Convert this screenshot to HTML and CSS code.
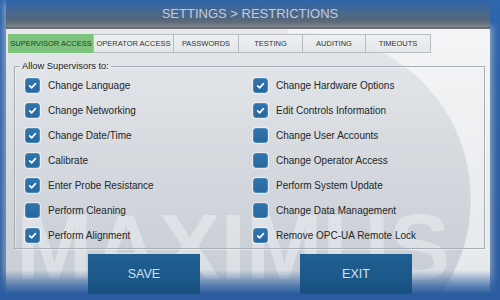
FILE: index.html
```html
<!DOCTYPE html>
<html>
<head>
<meta charset="utf-8">
<link rel="stylesheet" href="styles.css">
</head>
<body>
<div class="screen">
  <header class="topbar">
    <h1 class="title">SETTINGS &gt; RESTRICTIONS</h1>
  </header>
  <main class="panel">
    <div class="watermark" aria-hidden="true">MAXIMUS</div>
    <nav class="tabs">
      <div class="tab tab-sup active">SUPERVISOR ACCESS</div>
      <div class="tab tab-op">OPERATOR ACCESS</div>
      <div class="tab tab-pw">PASSWORDS</div>
      <div class="tab tab-test">TESTING</div>
      <div class="tab tab-aud">AUDITING</div>
      <div class="tab tab-time">TIMEOUTS</div>
    </nav>
    <fieldset class="group">
      <legend class="legend">Allow Supervisors to:</legend>
      <div class="grid">
        <div class="item"><span class="box on"><svg viewBox="0 0 15 15"><path d="M4.2 7.9l2.3 2.3 4.4-4.9"/></svg></span><span class="label">Change Language</span></div>
        <div class="item"><span class="box on"><svg viewBox="0 0 15 15"><path d="M4.2 7.9l2.3 2.3 4.4-4.9"/></svg></span><span class="label">Change Networking</span></div>
        <div class="item"><span class="box on"><svg viewBox="0 0 15 15"><path d="M4.2 7.9l2.3 2.3 4.4-4.9"/></svg></span><span class="label">Change Date/Time</span></div>
        <div class="item"><span class="box on"><svg viewBox="0 0 15 15"><path d="M4.2 7.9l2.3 2.3 4.4-4.9"/></svg></span><span class="label">Calibrate</span></div>
        <div class="item"><span class="box on"><svg viewBox="0 0 15 15"><path d="M4.2 7.9l2.3 2.3 4.4-4.9"/></svg></span><span class="label">Enter Probe Resistance</span></div>
        <div class="item"><span class="box"></span><span class="label">Perform Cleaning</span></div>
        <div class="item"><span class="box on"><svg viewBox="0 0 15 15"><path d="M4.2 7.9l2.3 2.3 4.4-4.9"/></svg></span><span class="label">Perform Alignment</span></div>
        <div class="item"><span class="box on"><svg viewBox="0 0 15 15"><path d="M4.2 7.9l2.3 2.3 4.4-4.9"/></svg></span><span class="label">Change Hardware Options</span></div>
        <div class="item"><span class="box on"><svg viewBox="0 0 15 15"><path d="M4.2 7.9l2.3 2.3 4.4-4.9"/></svg></span><span class="label">Edit Controls Information</span></div>
        <div class="item"><span class="box"></span><span class="label">Change User Accounts</span></div>
        <div class="item"><span class="box"></span><span class="label">Change Operator Access</span></div>
        <div class="item"><span class="box"></span><span class="label">Perform System Update</span></div>
        <div class="item"><span class="box"></span><span class="label">Change Data Management</span></div>
        <div class="item"><span class="box on"><svg viewBox="0 0 15 15"><path d="M4.2 7.9l2.3 2.3 4.4-4.9"/></svg></span><span class="label">Remove OPC-UA Remote Lock</span></div>
      </div>
    </fieldset>
    <div class="actions">
      <button class="btn">SAVE</button>
      <button class="btn">EXIT</button>
    </div>
  </main>
</div>
</body>
</html>
```

FILE: styles.css
```css
html, body {
  margin: 0;
  padding: 0;
}

body {
  width: 500px;
  height: 300px;
  overflow: hidden;
  font-family: "Liberation Sans", Arial, sans-serif;
}

.screen {
  width: 500px;
  height: 300px;
  display: flex;
  flex-direction: column;
  background: linear-gradient(180deg, #2f65ab 0%, #2c5fa3 50%, #2a5b9d 100%);
  overflow: hidden;
}

.topbar {
  height: 27px;
  margin: 0 10px 0 6px;
  padding-left: 4px;
  display: flex;
  align-items: center;
  justify-content: center;
  border-bottom: 2px solid #2c2c2c;
  background: linear-gradient(180deg, rgba(112, 112, 104, 0) 0%, rgba(108, 108, 100, 0.4) 45%, rgba(104, 104, 98, 0.9) 100%);
  box-shadow: -4px 0 6px -2px rgba(220, 228, 238, 0.5);
}

.title {
  margin: 0;
  font-size: 13px;
  font-weight: normal;
  color: #c0ccda;
  letter-spacing: 0;
  text-shadow: 0 0 2px rgba(90, 110, 140, 0.6);
}

.panel {
  flex: 1;
  margin: 0 10px 0 6px;
  position: relative;
  display: flex;
  flex-direction: column;
  background:
    radial-gradient(circle 166px at 17px 170px, rgba(255, 255, 255, 0) 165px, rgba(255, 255, 255, 0.55) 166.5px) right top / 202px 100% no-repeat,
    linear-gradient(180deg, #e6e8eb 0%, #d8dce1 40%, #cdd2d9 75%, #c6ccd4 100%);
  box-shadow: 0 0 6px 3px rgba(200, 207, 216, 0.55);
}

.panel::after {
  content: "";
  position: absolute;
  left: -8px;
  right: -12px;
  bottom: 0;
  height: 30px;
  background: linear-gradient(180deg, rgba(44, 94, 160, 0) 0%, rgba(44, 94, 160, 0.7) 50%, #2b5c9f 80%);
  z-index: 1;
  pointer-events: none;
}

.watermark {
  position: absolute;
  left: 10px;
  top: 172px;
  font-size: 92px;
  line-height: 1;
  font-weight: bold;
  color: rgba(255, 255, 255, 0.34);
  white-space: nowrap;
  z-index: 0;
  user-select: none;
}

.tabs {
  position: relative;
  z-index: 2;
  display: flex;
  margin: 5px 0 0 2px;
  height: 19px;
}

.tab {
  box-sizing: border-box;
  height: 19px;
  display: flex;
  align-items: center;
  justify-content: center;
  font-size: 7.5px;
  color: #2e3438;
  background: linear-gradient(180deg, #eef0f2 0%, #e4e7ea 100%);
  border: 1px solid #b7bcc2;
  margin-left: -1px;
  white-space: nowrap;
}

.tab.active {
  background: #7ec47f;
  border-color: #7ec47f;
  color: #26402a;
}

.tab-sup { width: 86px; margin-left: 0; }
.tab-op { width: 81px; }
.tab-pw { width: 66px; }
.tab-test { width: 65px; }
.tab-aud { width: 64px; }
.tab-time { width: 66px; }

.group {
  position: relative;
  z-index: 2;
  margin: 8px 5px 0 8px;
  padding: 0 0 0 10px;
  border: 1px solid #a9aeb5;
  box-shadow: 1px 1px 0 rgba(255, 255, 255, 0.45), inset 1px 1px 0 rgba(255, 255, 255, 0.35);
  min-width: 0;
}

.legend {
  font-size: 9.3px;
  line-height: 11px;
  color: #1f2326;
  padding: 0 2px;
  margin-left: -5px;
}

.grid {
  display: grid;
  grid-template-columns: 228px 1fr;
  grid-template-rows: repeat(7, 25px);
  grid-auto-flow: column;
  padding-top: 1px;
}

.item {
  display: flex;
  align-items: center;
}

.box {
  box-sizing: border-box;
  width: 15px;
  height: 15px;
  border-radius: 3px;
  background: linear-gradient(180deg, #2f74aa 0%, #2868a0 100%);
  border: 1px solid #4c89b8;
  box-shadow: 0 0 1px 1px rgba(255, 255, 255, 0.5);
  display: flex;
  flex-shrink: 0;
}

.box svg {
  width: 13px;
  height: 13px;
}

.box svg path {
  fill: none;
  stroke: #ffffff;
  stroke-width: 1.9;
  stroke-linecap: round;
  stroke-linejoin: round;
}

.label {
  margin-left: 8px;
  font-size: 10px;
  color: #232629;
  white-space: nowrap;
}

.actions {
  position: relative;
  z-index: 2;
  display: flex;
  justify-content: center;
  gap: 100px;
  margin-top: 5px;
  padding-left: 4px;
}

.btn {
  width: 112px;
  height: 40px;
  border: none;
  padding: 0;
  background: linear-gradient(180deg, #215f92 0%, #1c5889 60%, #174f7e 100%);
  color: #d2e1ef;
  font-family: "Liberation Sans", Arial, sans-serif;
  font-size: 12.5px;
}
```
